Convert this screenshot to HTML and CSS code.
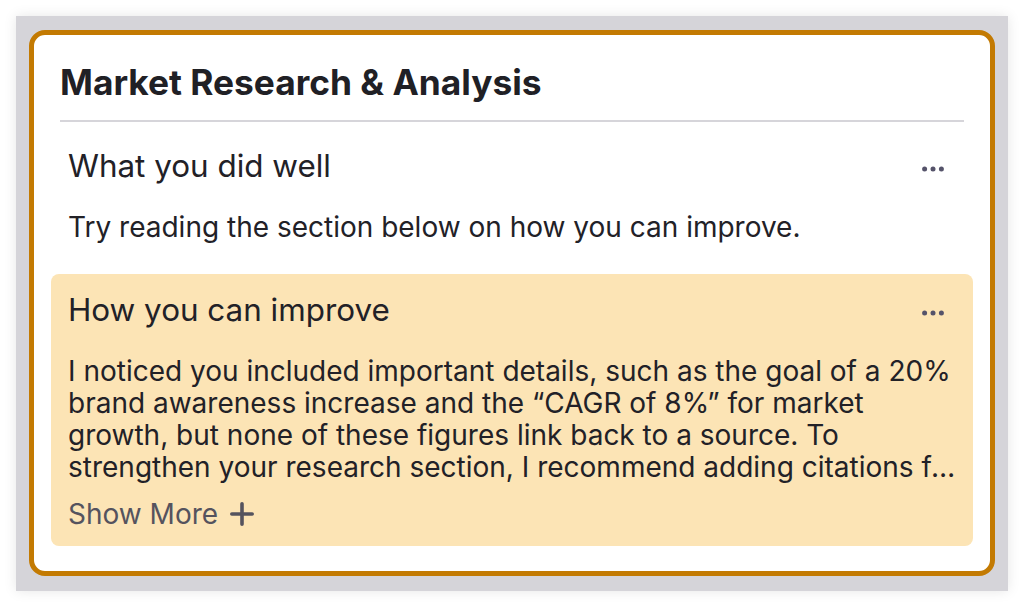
FILE: index.html
```html
<!DOCTYPE html>
<html lang="en">
<head>
<meta charset="utf-8">
<title>Market Research &amp; Analysis</title>
<link rel="stylesheet" href="styles.css">
</head>
<body>
<div class="frame">
  <div class="card">
    <h1 class="card-title">Market Research &amp; Analysis</h1>
    <div class="section">
      <div class="section-head">
        <h2 class="section-title">What you did well</h2>
        <svg class="more" width="22" height="6" viewBox="0 0 22 6" aria-hidden="true">
          <circle cx="2.6" cy="3" r="2.5"/><circle cx="11" cy="3" r="2.5"/><circle cx="19.4" cy="3" r="2.5"/>
        </svg>
      </div>
      <p class="section-body">Try reading the section below on how you can improve.</p>
    </div>
    <div class="section section-highlight">
      <div class="section-head">
        <h2 class="section-title">How you can improve</h2>
        <svg class="more" width="22" height="6" viewBox="0 0 22 6" aria-hidden="true">
          <circle cx="2.6" cy="3" r="2.5"/><circle cx="11" cy="3" r="2.5"/><circle cx="19.4" cy="3" r="2.5"/>
        </svg>
      </div>
      <p class="section-body"><span class="lines">I noticed you included important details, such as the goal of a 20% brand awareness increase and the “CAGR of 8%” for market growth, but none of these figures link back to a source. To</span><span class="last-line">strengthen your research section, I recommend adding citations for each figure so readers can verify the data and trust your analysis.</span></p>
      <button class="show-more" type="button">Show More
        <svg width="24" height="24" viewBox="0 0 24 24" aria-hidden="true"><path d="M12 1.8v20.4M1.8 12h20.4" stroke="currentColor" stroke-width="3.6" stroke-linecap="round" fill="none"/></svg>
      </button>
    </div>
  </div>
</div>
</body>
</html>
```
FILE: styles.css
```css
* { box-sizing: border-box; }
html, body { margin: 0; padding: 0; background: #ffffff; }
body {
  font-family: Inter, "Noto Sans", sans-serif;
  color: #222127;
  width: 1024px;
  height: 607px;
  padding: 16px;
}
.frame {
  width: 992px;
  height: 575px;
  background: #d5d4d9;
  padding: 14px 13px 15px;
  box-shadow: 0 0 12px rgba(0,0,0,0.10);
}
.card {
  height: 546px;
  border: 5px solid #c37a02;
  border-radius: 16px;
  background: #ffffff;
  padding: 0 17px;
  display: flex;
  flex-direction: column;
}
.card-title {
  margin: 0 9px 8px;
  padding: 26px 0 15px;
  font-size: 35.3px;
  line-height: 44px;
  font-weight: 700;
  color: #202025;
  border-bottom: 2px solid #d6d5da;
}
.section {
  padding: 12px 17px 16px;
  border-radius: 8px;
}
.section-highlight { background: #fce4b5; margin-top: 15.5px; }
.section-head {
  display: flex;
  align-items: center;
  justify-content: space-between;
  height: 48px;
}
.section-title {
  margin: 0;
  font-size: 31.4px;
  line-height: 40px;
  font-weight: 400;
  color: #222127;
}
.more { fill: #55536a; margin: 5px 12px 0 0; }
.section-body {
  margin: 20.5px 0 0;
  font-size: 28px;
  line-height: 32px;
  color: #222127;
}
.lines { display: block; }
.last-line {
  display: block;
  white-space: nowrap;
  overflow: hidden;
  text-overflow: ellipsis;
}
.show-more {
  margin-top: 15.5px;
  padding: 0;
  border: 0;
  background: none;
  font-family: inherit;
  font-size: 28px;
  line-height: 32px;
  color: #55535e;
  display: flex;
  align-items: center;
  gap: 12px;
}
```
